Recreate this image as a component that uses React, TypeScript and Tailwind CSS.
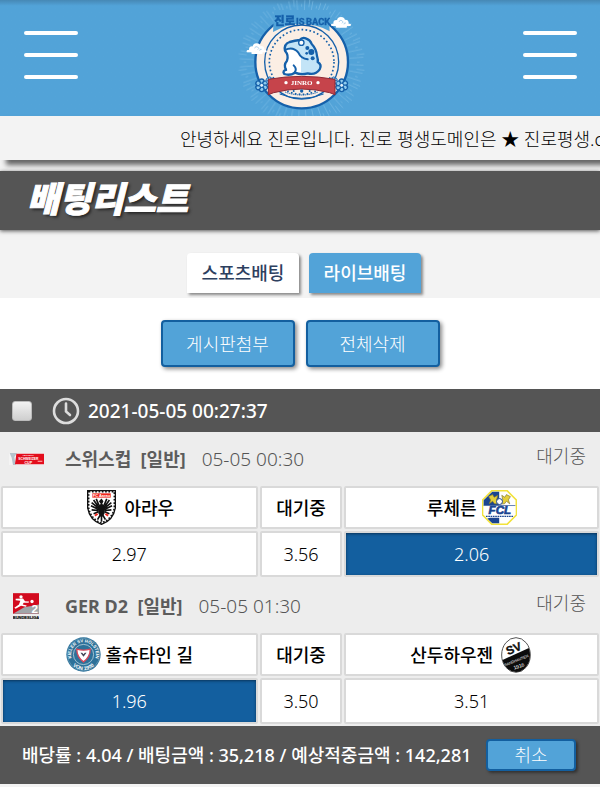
import { ReactNode, useState } from 'react';

type Match = {
  league: string;
  date: string;
  leagueLogo: ReactNode;
  home: string;
  homeLogo: ReactNode;
  away: string;
  awayLogo: ReactNode;
  odds: string[];
  picked: number;
};

function Cloud({ x, y }: { x: number; y: number }) {
  return (
    <g transform={`translate(${x} ${y})`} fill="#fff">
      <circle cx="16" cy="18" r="9" />
      <circle cx="30" cy="12" r="12" />
      <circle cx="43" cy="18" r="10" />
      <rect x="0" y="20" width="60" height="7" rx="3.5" />
      <rect x="14" y="26" width="34" height="6" rx="3" />
      <path d="M24 15q2-8 9-4t0 8" fill="none" stroke="#8fc0e4" strokeWidth="2" />
      <path d="M39 22q0-6 6-4" fill="none" stroke="#8fc0e4" strokeWidth="2" />
    </g>
  );
}

function Flower({ x, y, size }: { x: number; y: number; size: number }) {
  return (
    <g transform={`translate(${x} ${y}) scale(${size})`}>
      {[0, 60, 120, 180, 240, 300].map((a) => (
        <g key={a} transform={`rotate(${a})`}>
          <circle cy="-12" r="7" fill="#8fcbee" stroke="#1560aa" strokeWidth="4" />
        </g>
      ))}
      <circle r="6" fill="#dff1fc" stroke="#1560aa" strokeWidth="3" />
    </g>
  );
}

function Logo() {
  return (
    <svg viewBox="0 0 420 354" className="h-[118px] w-[140px]" role="img" aria-label="진로 IS BACK">
      <g stroke="#8cc6ea" strokeWidth="2" opacity="0.7">
        {Array.from({ length: 48 }, (_, i) => (
          <line key={i} x1="212" y1="20" x2="212" y2={i % 2 ? -4 : 12} transform={`rotate(${i * 7.5} 212 186)`} />
        ))}
        {Array.from({ length: 48 }, (_, i) => (
          <line key={i} x1="212" y1="42" x2="212" y2="0" transform={`rotate(${i * 7.5 + 3} 212 186)`} />
        ))}
      </g>
      <circle cx="212" cy="186" r="139" fill="#fbeee4" stroke="#1560aa" strokeWidth="7" />
      <circle cx="212" cy="186" r="111" fill="none" stroke="#1560aa" strokeWidth="4" />
      <circle cx="212" cy="186" r="97" fill="none" stroke="#1560aa" strokeWidth="5" strokeDasharray="5 7" />
      <path d="M130 30H292L296 94Q212 48 126 96Z" fill="#52a3d8" />
      <g fill="#1560aa" stroke="#1560aa" strokeWidth="1">
        <text x="130" y="76" fontSize="34" className="font-['Noto_Sans_CJK_KR',sans-serif] font-black">
          진로
        </text>
        <text x="195" y="75" fontSize="28" className="font-['Roboto',sans-serif] font-bold">
          IS
        </text>
        <text x="225" y="75" fontSize="28" className="font-['Roboto',sans-serif] font-bold">
          BACK
        </text>
      </g>
      <Cloud x={300} y={51} />
      <Cloud x={47} y={130} />
      <path
        d="M170 212Q156 196 168 182Q174 166 162 152Q158 132 176 126Q192 122 206 120Q214 110 226 116Q238 120 242 132Q256 146 258 168Q262 180 260 186Q274 194 266 208Q254 226 230 220Q210 226 192 218Q176 228 160 222Q154 214 164 210Z"
        fill="#c3e4f7"
      />
      <path d="M164 152Q190 140 210 170V218Q198 220 192 214Q176 226 160 220Q156 212 168 208Q158 194 170 180Q174 164 164 152Z" fill="#fff" />
      <path
        d="M166 210Q156 196 168 182Q174 166 162 152Q158 132 176 126Q192 122 206 120Q214 110 226 116Q238 120 242 132Q256 146 258 168Q262 180 260 186Q274 194 266 208Q254 226 230 220Q210 226 192 218Q176 228 160 222Q152 212 168 209"
        fill="none"
        stroke="#1560aa"
        strokeWidth="7"
        strokeLinejoin="round"
      />
      <path d="M162 150Q186 138 202 158Q210 176 230 178M190 218Q200 208 188 196" fill="none" stroke="#1560aa" strokeWidth="6" strokeLinecap="round" />
      <circle cx="211" cy="128" r="8" fill="#fff" stroke="#1560aa" strokeWidth="4" />
      <g fill="#1560aa">
        <circle cx="241" cy="156" r="9" />
        <circle cx="229" cy="144" r="6" />
        <circle cx="245" cy="175" r="6" />
        <circle cx="227" cy="160" r="4" />
      </g>
      <Flower x={92} y={256} size={1} />
      <Flower x={116} y={242} size={0.6} />
      <Flower x={332} y={256} size={1} />
      <Flower x={308} y={242} size={0.6} />
      <path
        d="M112 238Q212 220 312 238V284L296 278Q212 256 128 278L112 284Z"
        fill="#c6444b"
        stroke="#8d2c38"
        strokeWidth="3"
      />
      <text x="212" y="256" textAnchor="middle" fontSize="21" fill="#fff" className="font-['Liberation_Serif',serif] font-bold">
        JINRO
      </text>
      <circle cx="165" cy="248" r="5" fill="#fff" />
      <circle cx="261" cy="248" r="5" fill="#fff" />
      <g fill="#1560aa">
        <circle cx="188" cy="273" r="3" />
        <circle cx="212" cy="273" r="5" />
        <circle cx="236" cy="273" r="3" />
      </g>
      <path d="M162 276Q212 294 262 276" fill="none" stroke="#1560aa" strokeWidth="3" strokeDasharray="4 2" />
      <path d="M146 282Q212 308 278 282" fill="none" stroke="#1560aa" strokeWidth="3" />
    </svg>
  );
}

function SwissCupLogo() {
  return (
    <svg viewBox="0 0 105 36" className="h-3 w-[35px]">
      <rect width="105" height="36" fill="#f4f4f4" />
      <path d="M2 0H24L16 12L20 36H12L8 14Z" fill="#b5c3cc" />
      <path d="M22 2H105V34H18Z" fill="#e30d1c" />
      <g fill="#fff" textAnchor="middle" className="font-['Liberation_Sans',sans-serif] font-bold">
        <text x="58" y="9" fontSize="7">HELVETIA</text>
        <text x="58" y="21" fontSize="10">SCHWEIZER</text>
        <text x="58" y="32" fontSize="11">CUP</text>
      </g>
      <path d="M86 25H100" stroke="#ff8e90" strokeWidth="4" />
    </svg>
  );
}

function BundesligaLogo() {
  return (
    <svg viewBox="0 0 78 80" className="h-[27px] w-[26px]">
      <rect width="78" height="62" fill="#d20a1e" />
      <path d="M0 62L34 42L78 34V62Z" fill="#a1a5a8" />
      <circle cx="24" cy="11" r="5" fill="#fff" />
      <path d="M8 17L30 16L36 24L48 25L47 29L32 29L29 34L41 37L39 41L24 38L8 47L4 44L18 34L22 23L8 21Z" fill="#fff" />
      <circle cx="57" cy="25" r="5" fill="#fff" />
      <text x="65" y="59" textAnchor="middle" fontSize="35" fill="#fff" className="font-['Liberation_Sans',sans-serif] font-bold">
        2
      </text>
      <text
        x="39"
        y="79"
        textAnchor="middle"
        fontSize="12"
        fill="#111"
        stroke="#111"
        strokeWidth="0.6"
        className="font-['Liberation_Sans',sans-serif] font-bold"
      >
        BUNDESLIGA
      </text>
    </svg>
  );
}

function AarauLogo() {
  return (
    <svg viewBox="0 0 88 106" className="h-[35px] w-[29px]">
      <path d="M2 2H86V54Q80 92 44 104Q8 92 2 54Z" fill="#fff" stroke="#111" strokeWidth="4" />
      <path d="M5 5H83V54Q77 88 44 100Q11 88 5 54Z" fill="none" stroke="#111" strokeWidth="5" strokeDasharray="5 5" />
      <rect x="16" y="10" width="56" height="13" fill="#f0251c" />
      <text x="44" y="21" textAnchor="middle" fontSize="12" fill="#fff" className="font-['Liberation_Sans',sans-serif] font-bold">
        FC Aarau
      </text>
      <g fill="none" stroke="#111" strokeWidth="5">
        <path d="M36 46L28 27M34 50L20 30M34 54L14 38M34 58L12 48M34 62L14 60M35 66L20 72" />
        <path d="M52 46L60 27M54 50L68 30M54 54L74 38M54 58L76 48M54 62L74 60M53 66L68 72" />
        <path d="M44 76V96M40 76L32 90M48 76L56 90" />
      </g>
      <path d="M44 26L50 34L46 42L56 48L53 72L44 84L35 72L32 48L42 42L36 34Z" fill="#111" />
      <path d="M32 72L24 78M56 72L64 78" stroke="#f0251c" strokeWidth="6" />
    </svg>
  );
}

function LuzernLogo() {
  return (
    <svg viewBox="0 0 106 106" className="size-[35px]">
      <path d="M30 2H76L104 30V76L76 104H30L2 76V30Z" fill="#fff" stroke="#f2e23b" strokeWidth="5" />
      <path d="M31 5H52V47H5V31Z" fill="#1b4590" />
      <path d="M25 84H52V101H31L16 86Z" fill="#1b4590" />
      <g fill="#e5cf3a" stroke="#80782e" strokeWidth="2">
        <path d="M20 20L32 14L37 22L48 16L44 30L50 42H38L32 34L22 42L26 30Z" />
        <path d="M86 20L74 14L69 22L60 16L63 30L57 42H68L74 34L84 42L80 30Z" />
      </g>
      <circle cx="53" cy="35" r="9" fill="#fff" stroke="#1b4590" strokeWidth="3" />
      <path d="M5 47H101V76H5Z" fill="#fff" />
      <path d="M5 47H101" stroke="#1b4590" strokeWidth="2" />
      <text
        x="54"
        y="73"
        textAnchor="middle"
        fontSize="35"
        fill="#1b4590"
        stroke="#1b4590"
        strokeWidth="2"
        className="font-['Liberation_Sans',sans-serif] font-bold italic"
      >
        FCL
      </text>
      <path d="M12 80H94" stroke="#1b4590" strokeWidth="4" strokeDasharray="5 2" />
    </svg>
  );
}

function KielLogo() {
  return (
    <svg viewBox="0 0 104 104" className="size-[35px]">
      <defs>
        <path id="kiel-top" d="M20 71A37 37 0 1 1 84 71" />
        <path id="kiel-bottom" d="M6 52A46 46 0 0 0 98 52" />
      </defs>
      <circle cx="52" cy="52" r="51" fill="#2d7199" />
      <circle cx="52" cy="52" r="48" fill="none" stroke="#a8cbdc" strokeWidth="1" />
      <circle cx="52" cy="52" r="30" fill="none" stroke="#d5e7ef" strokeWidth="2" />
      <g fill="#fff" className="font-['Liberation_Sans',sans-serif] font-bold">
        <text textAnchor="middle" fontSize="13">
          <textPath href="#kiel-top" startOffset="50%">KIELER SV HOLSTEIN</textPath>
        </text>
        <text textAnchor="middle" fontSize="15">
          <textPath href="#kiel-bottom" startOffset="50%">VON 1900</textPath>
        </text>
      </g>
      <path d="M32 36Q52 42 72 36Q72 60 52 74Q32 60 32 36Z" fill="#fff" stroke="#d5485b" strokeWidth="4" />
      <path d="M43 47H48L52 51L56 47H61L52 59Z" fill="#445" />
    </svg>
  );
}

function SandhausenLogo() {
  return (
    <svg viewBox="0 0 90 108" className="h-9 w-[30px]">
      <defs>
        <clipPath id="svs-oval">
          <ellipse cx="45" cy="54" rx="42" ry="51" />
        </clipPath>
      </defs>
      <ellipse cx="45" cy="54" rx="43" ry="52" fill="#fff" stroke="#555" strokeWidth="3" />
      <g clipPath="url(#svs-oval)">
        <path d="M0 71L90 30V108H0Z" fill="#0c0c0c" />
        <g textAnchor="middle" className="font-['Liberation_Sans',sans-serif]">
          <text x="39" y="46" fontSize="35" fill="#0c0c0c" stroke="#0c0c0c" className="font-bold" transform="rotate(-22 40 36)">
            SV
          </text>
          <text x="46" y="74" fontSize="11" fill="#fff" transform="rotate(-22 46 70)">
            SANDHAUSEN
          </text>
          <text x="54" y="92" fontSize="15" fill="#fff" transform="rotate(-18 56 88)">
            1916
          </text>
        </g>
      </g>
    </svg>
  );
}

function MenuButton({ label }: { label: string }) {
  return (
    <button aria-label={label} className="flex w-[54px] flex-col gap-[18px]">
      <span className="h-1 w-full rounded-full bg-white" />
      <span className="h-1 w-full rounded-full bg-white" />
      <span className="h-1 w-full rounded-full bg-white" />
    </button>
  );
}

const matches: Match[] = [
  {
    league: '스위스컵',
    date: '05-05 00:30',
    leagueLogo: <SwissCupLogo />,
    home: '아라우',
    homeLogo: <AarauLogo />,
    away: '루체른',
    awayLogo: <LuzernLogo />,
    odds: ['2.97', '3.56', '2.06'],
    picked: 2,
  },
  {
    league: 'GER D2',
    date: '05-05 01:30',
    leagueLogo: <BundesligaLogo />,
    home: '홀슈타인 길',
    homeLogo: <KielLogo />,
    away: '산두하우젠',
    awayLogo: <SandhausenLogo />,
    odds: ['1.96', '3.50', '3.51'],
    picked: 0,
  },
];

const cell = 'flex items-center justify-center rounded-xs border-2 border-[#d9d9d9] bg-white';

function MatchRow({ match }: { match: Match }) {
  return (
    <section className="bg-[#ededed] pb-[2px]">
      <div className="flex h-[54px] items-center pr-[14px] pl-2">
        <div className="flex w-9 justify-center">{match.leagueLogo}</div>
        <h3 className="ml-[21px] font-bold whitespace-pre text-[#5c5c5c]">{match.league}  [일반]</h3>
        <span className="ml-4 text-[19px] font-light text-[#555]">{match.date}</span>
        <span className="ml-auto pb-[6px] font-light text-[#555]">대기중</span>
      </div>
      <div className="grid grid-cols-[257fr_83fr_255fr] gap-[2px] px-px font-medium text-black">
        <div className={`${cell} h-[43px] gap-[5px]`}>
          <span className="flex w-[35px] justify-center">{match.homeLogo}</span>
          {match.home}
        </div>
        <div className={`${cell} h-[43px]`}>대기중</div>
        <div className={`${cell} h-[43px] gap-[5px]`}>
          {match.away}
          <span className="flex w-[35px] justify-center">{match.awayLogo}</span>
        </div>
        {match.odds.map((odd, i) => (
          <button
            key={i}
            className={
              i === match.picked
                ? 'h-[46px] rounded-xs border-2 border-[#d9d9d9] bg-[#135f9f] font-light text-white inset-shadow-[0_1px_3px_#0a3358]'
                : `${cell} h-[46px] font-light`
            }
          >
            {odd}
          </button>
        ))}
      </div>
    </section>
  );
}

export default function App() {
  const [checked, setChecked] = useState(false);

  return (
    <div className="bg-[#f3f3f3] font-['Noto_Sans','Noto_Sans_CJK_KR',sans-serif] text-[18px] leading-6">
      <header className="flex h-[116px] items-start justify-between overflow-hidden bg-[#52a3d8] bg-linear-to-b from-[#4688b5] to-[#52a3d8] to-5% pr-[23px] pl-6">
        <div className="pt-[31px]">
          <MenuButton label="메뉴" />
        </div>
        <Logo />
        <div className="pt-[31px]">
          <MenuButton label="내 정보" />
        </div>
      </header>

      <div className="mb-[11px] h-11 overflow-hidden bg-[#f3f3f3] pt-[11px] pl-[180px] font-light whitespace-nowrap text-black shadow-[6px_5px_5px_#666]">
        안녕하세요 진로입니다. 진로 평생도메인은 ★ 진로평생.com
      </div>

      <div className="flex h-[59px] items-center bg-[#555] pl-[27px] shadow-[0_1px_4px_#555]">
        <h1 className="pb-2 font-['Noto_Sans_CJK_KR',sans-serif] text-[35px] leading-10 font-black text-white italic [-webkit-text-stroke:1px_white] [text-shadow:2px_2px_3px_#222]">
          배팅리스트
        </h1>
      </div>

      <nav className="flex h-[68px] items-end justify-center gap-[10px] pb-[5px] pl-2">
        <button className="h-10 w-28 rounded-t-[4px] bg-white font-medium text-[#2d405f] shadow-[2px_2px_3px_#888]">
          스포츠배팅
        </button>
        <button className="h-10 w-28 rounded-t-[4px] bg-[#52a3d8] font-medium text-white shadow-[2px_2px_3px_#888]">
          라이브배팅
        </button>
      </nav>

      <div className="flex h-[91px] items-center justify-center gap-[11px] bg-white">
        <button className="h-[47px] w-[134px] rounded-[4px] border-2 border-[#135f9f] bg-[#52a3d8] font-light text-white shadow-[2px_2px_4px_#888]">
          게시판첨부
        </button>
        <button className="h-[47px] w-[134px] rounded-[4px] border-2 border-[#135f9f] bg-[#52a3d8] font-light text-white shadow-[2px_2px_4px_#888]">
          전체삭제
        </button>
      </div>

      <div className="flex h-[43px] items-center bg-[#555] pl-3 text-white">
        <input
          type="checkbox"
          id="slip"
          checked={checked}
          onChange={(e) => setChecked(e.target.checked)}
          className="size-5 appearance-none rounded-[3px] border border-[#bbb] bg-linear-to-b from-[#f2f2f2] to-[#cfcfcf] checked:bg-[#52a3d8]"
        />
        <svg viewBox="0 0 28 28" className="ml-5 size-7" fill="none" stroke="#ddd">
          <circle cx="14" cy="14" r="12" strokeWidth="2.6" />
          <path d="M14 6.5V14.5L18 18" strokeWidth="2.6" strokeLinecap="round" />
        </svg>
        <label htmlFor="slip" className="ml-2 text-[19px] font-medium">
          2021-05-05 00:27:37
        </label>
      </div>

      {matches.map((match) => (
        <MatchRow key={match.league} match={match} />
      ))}

      <footer className="flex h-[58px] items-center justify-between bg-[#555] pr-6 pl-[22px] text-white">
        <p className="font-medium whitespace-nowrap">배당률 : 4.04 / 배팅금액 : 35,218 / 예상적중금액 : 142,281</p>
        <button className="h-8 w-[90px] shrink-0 rounded-[4px] border-2 border-[#135f9f] bg-[#52a3d8] font-light text-white shadow-[2px_2px_3px_#333]">
          취소
        </button>
      </footer>
      <div className="h-[3px]" />
    </div>
  );
}
